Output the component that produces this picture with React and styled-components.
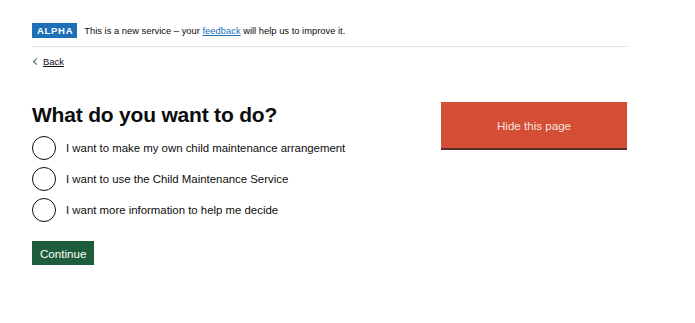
import React from 'react';
import styled, { createGlobalStyle } from 'styled-components';

const GlobalStyle = createGlobalStyle`
  body {
    margin: 0;
    background: #ffffff;
    font-family: "Liberation Sans", Arial, sans-serif;
    color: #0b0c0c;
  }
`

const Page = styled.div`
  width: 595px;
  padding: 23px 0 0 32px;
`

const PhaseBanner = styled.div`
  display: flex;
  align-items: center;
  gap: 7px;
  padding-bottom: 8px;
  border-bottom: 1px solid #e0e1e2;
  font-size: 9.4px;
`

const Tag = styled.strong`
  background: #1d70b8;
  color: #ffffff;
  font-size: 9.5px;
  font-weight: 700;
  letter-spacing: 0.7px;
  padding: 2px 4px 2px 5px;
  line-height: 11px;
`

const Link = styled.a`
  color: #1d70b8;
  text-decoration: underline;
`

const BackLink = styled.a`
  display: inline-flex;
  align-items: center;
  gap: 4px;
  margin-top: 9px;
  font-size: 9.4px;
  color: #0b0c0c;
  text-decoration: underline;
`

const Chevron = styled.span`
  display: inline-block;
  width: 4px;
  height: 4px;
  border-left: 1px solid #505a5f;
  border-bottom: 1px solid #505a5f;
  transform: rotate(45deg);
  margin-left: 2px;
`

const Columns = styled.div`
  display: grid;
  grid-template-columns: 1fr 186px;
  column-gap: 12px;
  margin-top: 34px;
`

const Heading = styled.h1`
  margin: 0 0 8px;
  font-size: 21px;
  line-height: 26px;
  font-weight: 700;
  letter-spacing: -0.2px;
`

const RadioList = styled.div`
  display: flex;
  flex-direction: column;
  gap: 7px;
`

const RadioRow = styled.label`
  display: flex;
  align-items: center;
  gap: 10px;
  font-size: 11.4px;
  cursor: pointer;
`

const Circle = styled.span`
  box-sizing: border-box;
  width: 24px;
  height: 24px;
  border: 1.6px solid #0b0c0c;
  border-radius: 50%;
  flex-shrink: 0;
`

const Button = styled.button`
  margin-top: 19px;
  border: 0;
  padding: 6px 8px 5px;
  font-family: inherit;
  font-size: 11.6px;
  color: #ffffff;
  background: #1e5c3e;
  box-shadow: 0 1px 0 #0b2f1d;
`

const HideButton = styled.button`
  width: 186px;
  height: 46px;
  margin-top: 0;
  border: 0;
  font-family: inherit;
  font-size: 11.6px;
  color: #f7e3df;
  background: #d44d35;
  box-shadow: 0 2px 0 #55302a;
`

const options = [
  'I want to make my own child maintenance arrangement',
  'I want to use the Child Maintenance Service',
  'I want more information to help me decide',
]

const App = () => {
  return (
    <Page>
      <GlobalStyle />
      <PhaseBanner>
        <Tag>ALPHA</Tag>
        <span>This is a new service – your <Link href="#">feedback</Link> will help us to improve it.</span>
      </PhaseBanner>
      <BackLink href="#"><Chevron />Back</BackLink>
      <Columns>
        <div>
          <Heading>What do you want to do?</Heading>
          <RadioList>
            {options.map(o => (
              <RadioRow key={o}>
                <Circle />
                {o}
              </RadioRow>
            ))}
          </RadioList>
          <Button>Continue</Button>
        </div>
        <div>
          <HideButton>Hide this page</HideButton>
        </div>
      </Columns>
    </Page>
  );
}
export default App
